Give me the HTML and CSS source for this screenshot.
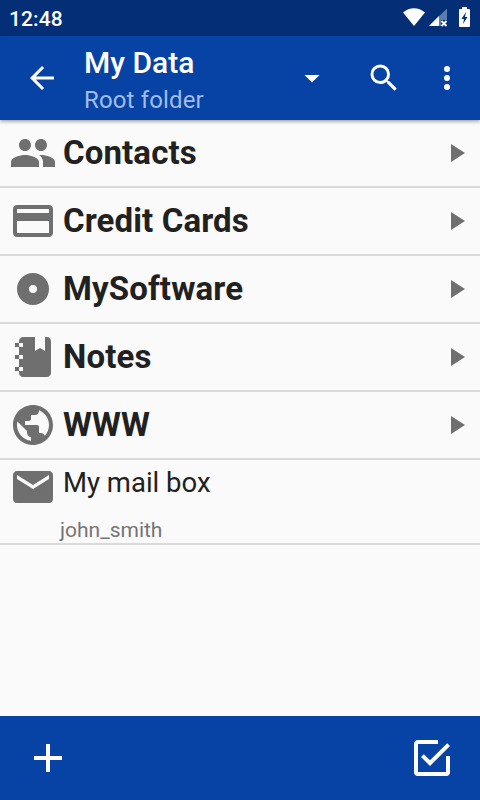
FILE: index.html
```html
<!DOCTYPE html>
<html lang="en">
<head>
    <meta charset="UTF-8">
    <meta name="viewport" content="width=device-width, initial-scale=1.0">
    <title>My Data</title>
    <link rel="stylesheet" href="styles.css">
</head>
<body>

    <div class="status-bar">
        <span class="clock">12:48</span>
        <svg class="status-icons" viewBox="0 0 70 24">
            <path fill="#fff" d="M0 5.500C6.500-.2 15.500-.2 22 5.500L11 19z"/>
            <path fill="#5d7cae" d="M44 1.500V13H38V19H26z"/>
            <path fill="#fff" d="M36 9V19H26z"/>
            <path stroke="#fff" stroke-width="1.800" d="M38.500 14l5 5M43.500 14l-5 5"/>
            <path fill="#fff" d="M59 0h5v2h2q1 0 1 1v16q0 1-1 1h-9q-1 0-1-1V3q0-1 1-1h2z"/>
            <path fill="#042f77" d="M63 5l-4.500 7h2.500L60 17l4.500-7H62z"/>
        </svg>
    </div>

    <header class="app-bar">
        <svg class="icon back" viewBox="0 0 24 24"><path d="M20 11H7.830l5.590-5.590L12 4l-8 8 8 8 1.410-1.410L7.830 13H20z"/></svg>
        <div class="titles">
            <h1>My Data</h1>
            <p>Root folder</p>
        </div>
        <svg class="icon dropdown" viewBox="0 0 24 24"><path d="M7 10l5 5 5-5z"/></svg>
        <svg class="icon search" viewBox="0 0 24 24"><path d="M15.500 14h-.79l-.28-.27A6.471 6.471 0 0 0 16 9.500 6.500 6.500 0 1 0 9.500 16c1.610 0 3.090-.59 4.230-1.570l.27.28v.79l5 4.990L20.490 19zM9.500 14C7.010 14 5 11.990 5 9.500S7.010 5 9.500 5 14 7.010 14 9.500 11.990 14 9.500 14z"/></svg>
        <svg class="icon more" viewBox="0 0 24 24"><circle cx="12" cy="6" r="2"/><circle cx="12" cy="12" r="2"/><circle cx="12" cy="18" r="2"/></svg>
    </header>

    <ul class="list">
        <li class="row">
            <svg class="row-icon" viewBox="0 0 24 24"><path d="M16 11c1.660 0 2.990-1.340 2.990-3S17.660 5 16 5s-3 1.340-3 3 1.340 3 3 3zM8 11c1.660 0 2.990-1.340 2.990-3S9.660 5 8 5 5 6.340 5 8s1.340 3 3 3zM8 13c-2.330 0-7 1.170-7 3.500V19h14v-2.500C15 14.170 10.330 13 8 13zM16 13c-.29 0-.62.020-.97.050 1.160.84 1.970 1.970 1.970 3.450V19h6v-2.500c0-2.330-4.670-3.500-7-3.500z"/></svg>
            <span class="name">Contacts</span>
            <svg class="arrow" viewBox="0 0 14 18"><path d="M0 0l14 9-14 9z"/></svg>
        </li>
        <li class="row">
            <svg class="row-icon" viewBox="0 0 24 24"><path d="M20 4H4c-1.110 0-1.990.89-1.990 2L2 18c0 1.110.89 2 2 2h16c1.110 0 2-.89 2-2V6c0-1.110-.89-2-2-2zm0 14H4v-6h16zm0-10H4V6h16z"/></svg>
            <span class="name">Credit Cards</span>
            <svg class="arrow" viewBox="0 0 14 18"><path d="M0 0l14 9-14 9z"/></svg>
        </li>
        <li class="row">
            <svg class="row-icon" viewBox="0 0 24 24"><path fill-rule="evenodd" d="M12 4a8 8 0 1 0 0 16 8 8 0 0 0 0-16zm0 6a2 2 0 1 1 0 4 2 2 0 0 1 0-4z"/></svg>
            <span class="name">MySoftware</span>
            <svg class="arrow" viewBox="0 0 14 18"><path d="M0 0l14 9-14 9z"/></svg>
        </li>
        <li class="row">
            <svg class="row-icon" viewBox="0 0 24 24"><path d="M3 7V5h2V4c0-1.110.9-2 2-2h6v7l2.500-1.500L18 9V2h1c1.050 0 2 .95 2 2v16c0 1.050-.95 2-2 2H7c-1.050 0-2-.95-2-2v-1H3v-2h2v-4H3v-2h2V7zm4 4H5v2h2zm0-4V5H5v2zm0 12v-2H5v2z"/></svg>
            <span class="name">Notes</span>
            <svg class="arrow" viewBox="0 0 14 18"><path d="M0 0l14 9-14 9z"/></svg>
        </li>
        <li class="row">
            <svg class="row-icon" viewBox="0 0 24 24"><path d="M12 2C6.480 2 2 6.480 2 12s4.480 10 10 10 10-4.480 10-10S17.520 2 12 2zm-1 17.930c-3.950-.49-7-3.850-7-7.930 0-.62.080-1.210.21-1.790L9 15v1c0 1.100.9 2 2 2zm6.900-2.540c-.26-.81-1-1.390-1.900-1.390h-1v-3c0-.55-.45-1-1-1H8v-2h2c.55 0 1-.45 1-1V7h2c1.100 0 2-.9 2-2v-.41c2.930 1.190 5 4.060 5 7.410 0 2.080-.8 3.970-2.100 5.390z"/></svg>
            <span class="name">WWW</span>
            <svg class="arrow" viewBox="0 0 14 18"><path d="M0 0l14 9-14 9z"/></svg>
        </li>
        <li class="row entry">
            <svg class="row-icon" viewBox="0 0 24 24"><path d="M20 4H4c-1.100 0-1.990.9-1.990 2L2 18c0 1.100.9 2 2 2h16c1.100 0 2-.9 2-2V6c0-1.100-.9-2-2-2zm0 4l-8 5-8-5V6l8 5 8-5z"/></svg>
            <div class="entry-text">
                <span class="entry-name">My mail box</span>
                <span class="entry-user">john_smith</span>
            </div>
        </li>
    </ul>

    <footer class="bottom-bar">
        <svg class="action" viewBox="0 0 24 24"><path d="M19 13h-6v6h-2v-6H5v-2h6V5h2v6h6z"/></svg>
        <svg class="action" viewBox="0 0 24 24"><path d="M19 19H5V5h10V3H5c-1.110 0-2 .89-2 2v14a2 2 0 0 0 2 2h14a2 2 0 0 0 2-2v-8h-2zM7.910 10.080L6.500 11.500 11 16 21 6l-1.410-1.420L11 13.170z"/></svg>
    </footer>

</body>
</html>
```
FILE: styles.css
```css
* {
    box-sizing: border-box;
}

body {
    display: flex;
    flex-direction: column;
    height: 800px;
    margin: 0;
    background-color: #fafafa;
    font-family: Roboto, sans-serif;
    overflow: hidden;
}

svg {
    display: block;
    flex: none;
}

.status-bar {
    display: flex;
    justify-content: space-between;
    flex: none;
    height: 36px;
    padding: 0 10px 0 9px;
    background-color: #042f77;
}

.clock {
    color: white;
    font-size: 21px;
    font-weight: 500;
    letter-spacing: 0.1px;
    line-height: 39px;
}

.status-icons {
    width: 70px;
    height: 24px;
    margin-top: 7px;
    margin-right: -3px;
}

.app-bar {
    display: flex;
    align-items: center;
    flex: none;
    height: 84px;
    padding-left: 24px;
    background-color: #0743a5;
    box-shadow: 0 1px 4px rgba(0, 0, 0, 0.45);
    z-index: 1;
}

.icon {
    width: 36px;
    height: 36px;
    fill: white;
}

.titles {
    width: 210px;
    margin-left: 24px;
    padding-top: 6px;
}

h1 {
    margin: 0;
    color: white;
    font-size: 30px;
    font-weight: 500;
    line-height: 38px;
}

.titles p {
    margin: 0;
    color: #a3bbe8;
    font-size: 24px;
    letter-spacing: 0.15px;
    line-height: 36px;
}

.search {
    margin-left: 36px;
}

.more {
    margin-left: 27px;
}

.list {
    flex: 1;
    margin: 0;
    padding: 0;
    list-style: none;
}

.row {
    display: flex;
    align-items: center;
    height: 68px;
    padding: 0 15px 0 9px;
    border-bottom: 2px solid #dadada;
}

.row-icon {
    width: 48px;
    height: 48px;
    margin-right: 6px;
    fill: #6f6f6f;
}

.name {
    flex: 1;
    color: #212121;
    font-size: 33px;
    font-weight: bold;
    letter-spacing: 0.12px;
    line-height: 40px;
}

.arrow {
    width: 14px;
    height: 18px;
    fill: #6f6f6f;
}

.entry {
    align-items: flex-start;
    height: 85px;
    padding-top: 3px;
}

.entry-text {
    display: flex;
    flex-direction: column;
}

.entry-name {
    color: #212121;
    font-size: 27.5px;
    line-height: 40px;
}

.entry-user {
    margin: 13px 0 0 -3px;
    color: #757575;
    font-size: 21px;
    line-height: 28px;
}

.bottom-bar {
    display: flex;
    justify-content: space-between;
    align-items: center;
    flex: none;
    height: 84px;
    padding: 0 24px;
    background-color: #0743a5;
}

.action {
    width: 48px;
    height: 48px;
    fill: white;
}
```
